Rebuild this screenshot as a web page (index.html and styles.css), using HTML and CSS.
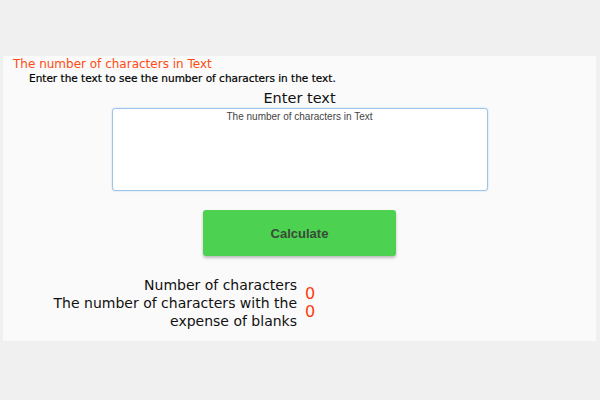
FILE: index.html
```html
<!DOCTYPE html>
<html lang="en">
<head>
  <meta charset="UTF-8" />
  <title>The number of characters in Text</title>
  <link rel="stylesheet" href="styles.css">
</head>
<body>
  <div class="panel">
    <h1>The number of characters in Text</h1>
    <p class="intro">Enter the text to see the number of characters in the text.</p>

    <label class="field-label" for="text">Enter text</label>
    <textarea id="text">The number of characters in Text</textarea>

    <button class="calc">Calculate</button>

    <div class="result">
      <div class="labels">
        <div>Number of characters</div>
        <div>The number of characters with the<br>expense of blanks</div>
      </div>
      <div class="values">
        <div>0</div>
        <div>0</div>
      </div>
    </div>
  </div>
</body>
</html>
```

FILE: styles.css
```css
body { margin: 0; background: #f0f0f0; font-family: "Comic Sans MS", "DejaVu Sans", sans-serif; }
.panel { margin: 56px 4px 0 3px; height: 285px; background: #fafafa; padding: 0 10px; box-sizing: border-box; }
h1 { margin: 0; padding-top: 1px; font-size: 12px; font-weight: normal; color: #ff4b12; line-height: 14px; }
.intro { margin: 0 0 0 16px; font-size: 10.5px; line-height: 15px; color: #000; -webkit-text-stroke: 0.2px #000; }
.field-label { display: block; text-align: center; font-size: 14.5px; line-height: 17px; margin-top: 4px; color: #111; }
textarea { display: block; width: 376px; height: 83px; margin: 1px auto 0; box-sizing: border-box; border: 1px solid #9ec4e8; border-radius: 3px; box-shadow: 0 0 2px #bcd8f2; background: #fff; resize: none; text-align: center; font-family: "Liberation Sans", Arial, sans-serif; font-size: 10px; color: #444; padding: 2px; }
.calc { display: block; width: 193px; height: 46px; margin: 19px auto 0; border: none; border-radius: 3px; background: #4cd150; box-shadow: 0 2px 3px rgba(0,0,0,0.25); font-family: "Liberation Sans", Arial, sans-serif; font-size: 13px; font-weight: bold; color: #3a4a3a; }
.result { display: flex; margin-top: 20px; }
.labels { text-align: right; font-size: 14px; line-height: 18px; color: #111; width: 284px; }
.values { display: flex; flex-direction: column; justify-content: center; margin-left: 8px; color: #ff3a10; font-size: 16px; line-height: 18px; }
```
